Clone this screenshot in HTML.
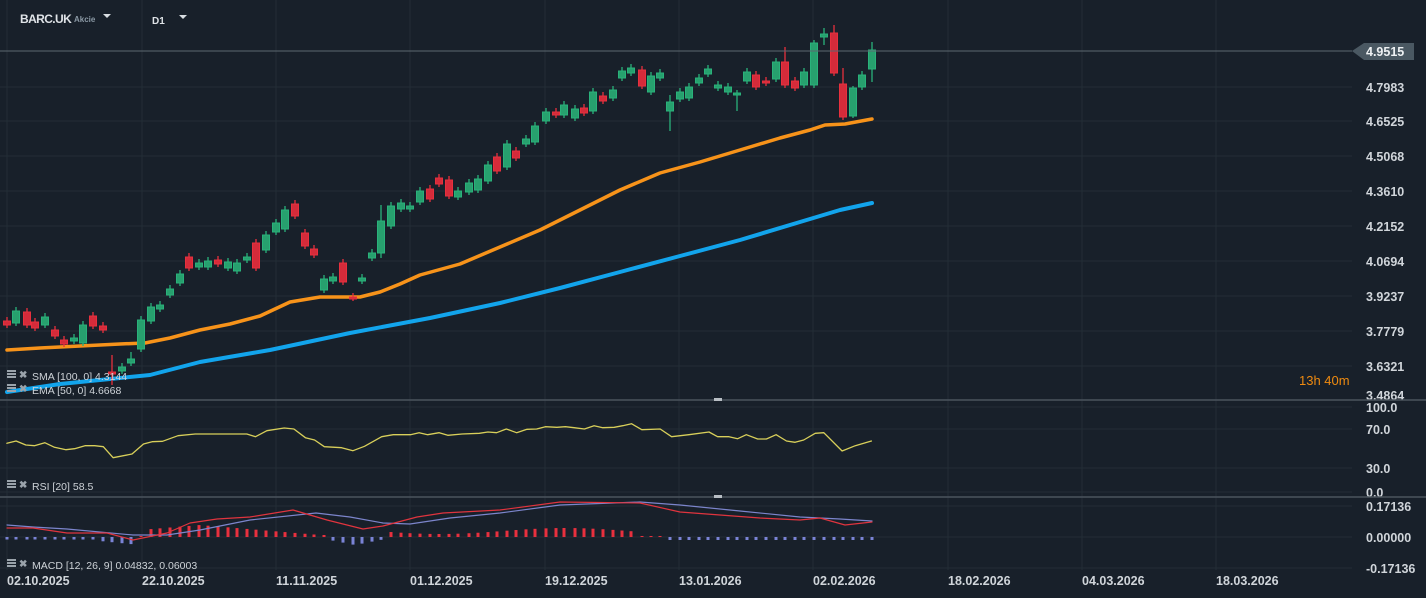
<!DOCTYPE html>
<html><head><meta charset="utf-8">
<style>
html,body{margin:0;padding:0;background:#18202a;}
body{width:1426px;height:598px;overflow:hidden;position:relative;font-family:"Liberation Sans",sans-serif;}
svg{position:absolute;left:0;top:0;}
</style></head><body>
<svg id="s" width="1426" height="598" xmlns="http://www.w3.org/2000/svg" font-family="Liberation Sans, sans-serif">
<rect width="1426" height="598" fill="#18202a"/>
<g id="grid" stroke="#232d36" stroke-width="1"></g>
<g id="main"></g>
<!-- header -->
<text x="20" y="23" fill="#dfe3e7" font-size="12" font-weight="bold" letter-spacing="-0.6">BARC.UK</text>
<text x="74" y="22" fill="#8a98a4" font-size="8" font-weight="bold">Akcie</text>
<path d="M103 14 l8 0 l-4 4 z" fill="#d8dde2"/>
<text x="152" y="24" fill="#dfe3e7" font-size="10" font-weight="bold">D1</text>
<path d="M179 15 l8 0 l-4 4 z" fill="#d8dde2"/>
<!-- price line -->
<line x1="0" y1="51" x2="1352" y2="51" stroke="#5c6770" stroke-width="1"/>
<path d="M1352 51 L1364 43 L1414 43 L1414 60 L1364 60 Z" fill="#4a5862"/>
<text x="1366" y="56" fill="#eef1f3" font-size="12.5" font-weight="bold">4.9515</text>
<g id="labels" fill="#d0d5da" font-size="12.5" font-weight="bold"></g>
<!-- panel separators -->
<line x1="0" y1="400" x2="1426" y2="400" stroke="#4a545d" stroke-width="1.5"/>
<line x1="0" y1="497" x2="1426" y2="497" stroke="#4a545d" stroke-width="1.5"/>
<rect x="714" y="398" width="8" height="3" fill="#b8bec4"/>
<rect x="714" y="495" width="8" height="3" fill="#b8bec4"/>
<text x="1299" y="385" fill="#ee8a10" font-size="13">13h 40m</text>
<g id="legend" fill="#cdd2d7" font-size="10.5"></g>
</svg>
<script>
const NS="http://www.w3.org/2000/svg";
function el(p,t,a){const e=document.createElementNS(NS,t);for(const k in a)e.setAttribute(k,a[k]);p.appendChild(e);return e;}
const grid=document.getElementById('grid'),main=document.getElementById('main'),lab=document.getElementById('labels'),leg=document.getElementById('legend');
const gx=[7,142,276,410,545,679,813,948,1082,1216];
gx.forEach(x=>{el(grid,'line',{x1:x,y1:0,x2:x,y2:570});});
const py=[[51,null],[87,'4.7983'],[121,'4.6525'],[156,'4.5068'],[191,'4.3610'],[226,'4.2152'],[261,'4.0694'],[296,'3.9237'],[331,'3.7779'],[366,'3.6321'],[395,'3.4864']];
py.forEach(([y,t])=>{if(y!==51&&y!==395)el(grid,'line',{x1:0,y1:y,x2:1352,y2:y});if(t){const e=el(lab,'text',{x:1366,y:y+5});e.textContent=t;}});
[[407,'100.0'],[429,'70.0'],[468,'30.0'],[492,'0.0'],[506,'0.17136'],[537,'0.00000'],[568,'-0.17136']].forEach(([y,t])=>{
 el(grid,'line',{x1:0,y1:y,x2:1352,y2:y});const e=el(lab,'text',{x:1366,y:y+5});e.textContent=t;});
const ds=['02.10.2025','22.10.2025','11.11.2025','01.12.2025','19.12.2025','13.01.2026','02.02.2026','18.02.2026','04.03.2026','18.03.2026'];
ds.forEach((d,i)=>{const e=el(lab,'text',{x:gx[i],y:585});e.textContent=d;});
const C=[[7,321,325],[16,323,311],[27,312,325],[35,322,328],[45,325,317],[55,330,336],[64,340,344],[74,341,338],[83,343,325],[93,316,326],[103,326,330],[112,372,374],[122,371,367],[131,363,359],[141,349,320],[151,321,307],[160,309,305],
[170,295,289],[180,283,274],[189,257,268],[199,267,263],[208,267,261],[218,260,264],[228,268,262],[237,271,263],[247,260,257],[256,243,268],[266,250,235],[276,232,223],[285,229,210],[295,204,216],[305,233,246],[314,249,255],[324,290,279],[333,281,277],[343,263,282],[353,297,298],[362,281,278],[372,258,253],[381,253,221],[391,226,206],[401,209,203],[410,209,206],[420,202,191],[430,189,199],[439,178,184],[449,180,196],[458,197,191],[469,192,183],[478,190,179],[488,181,165],[497,157,171],[507,167,144],[516,151,158],[526,144,139],[535,142,126],[546,121,112],[556,112,115],[564,115,105],[575,118,109],[584,108,113],[593,111,92],[603,96,101],[613,98,90],
[622,78,71],[631,73,68],[642,70,86],[651,92,76],[660,78,73],[670,111,102],[680,99,92],[689,98,87],[699,83,78],[708,74,69],[718,88,85],[728,92,87],[737,95,93],[747,81,72],[756,75,87],[766,81,83],[776,79,62],[785,62,85],[795,81,88],[804,85,72],[814,85,43],[824,37,34],[834,33,73],[843,84,117],[853,116,88],[862,87,75],[872,69,50]];
const ext={112:[355,385],670:[95,131],737:[90,111],843:[68,120],853:[86,118],872:[42,82],824:[28,45],834:[25,76],814:[40,88],785:[47,88],381:[205,258],131:[352,366]};
function poly(pts,st,w){return el(main,'polyline',{points:pts.map(p=>p.join(',')).join(' '),fill:'none',stroke:st,'stroke-width':w,'stroke-linejoin':'round','stroke-linecap':'round'});}
poly([[7,350],[40,348],[80,346],[120,344],[145,343],[170,338],[200,330],[230,324],[260,316],[290,302],[320,297],[360,297],[380,292],[400,284],[420,275],[460,264],[500,247],[540,230],[580,210],[620,190],[660,173],[700,162],[740,150],[780,138],[810,130],[825,125],[845,124],[872,119]],'#f7931a',3.5);
poly([[7,392],[60,384],[100,380],[150,375],[200,362],[270,350],[350,333],[430,318],[500,303],[560,288],[620,272],[680,256],[740,240],[800,222],[840,210],[872,203]],'#12a4ec',4);
C.forEach(([x,o,c])=>{const up=c<o;const col=up?'#2ab27b':'#e8303e';const top=Math.min(o,c),bot=Math.max(o,c);
 let h=top-4,l=bot+3;if(ext[x]){h=ext[x][0];l=ext[x][1];}
 el(main,'line',{x1:x,y1:h,x2:x,y2:l,stroke:col,'stroke-width':1.3});
 el(main,'rect',{x:x-3.5,y:top,width:7,height:Math.max(bot-top,2),fill:up?'#27a06e':'#d52b3a',stroke:col,'stroke-width':1});});
const r=[[12,130],[28,123],[45,135],[60,137],[78,128],[95,142],[115,149],[130,146],[148,137],[165,137],[180,140],[197,173],[230,162],[250,132],[265,125],[283,124],[310,107],[340,102],[400,102],[430,102],[445,110],[465,92],[495,84],[512,87],[532,113],[548,120],[565,140],[595,143],[615,152],[635,139],[665,110],[685,104],[715,104],[730,98],[745,104],[765,98],[780,106],[805,102],[835,100],[850,96],[865,98],[882,87],[900,98],[918,88],[935,87],[950,80],[970,82],[985,80],[1000,83],[1018,87],[1035,77],[1050,83],[1070,82],[1085,77],[1100,71],[1118,89],[1150,87],[1170,110],[1200,104],[1235,96],[1250,110],[1270,110],[1285,116],[1300,104],[1320,117],[1335,117],[1352,104],[1370,123],[1385,127],[1400,120],[1420,100],[1435,98],[1467,153],[1490,137],[1518,123]].map(([a,b])=>[(a/1.742).toFixed(1),(400+b/3).toFixed(1)]);
poly(r,'#d8cf5a',1.3);
C.forEach(([x])=>{let v;
 if(x<100)v=-2.5;else if(x<140)v=-4-(x-100)/10;else if(x<150)v=1;else if(x<330){v=12-Math.abs(x-200)/12;if(v<2)v=2;}
 else if(x<390)v=-(8-Math.abs(x-355)/5);else if(x<640)v=6+3*Math.sin(x/40);else if(x<665)v=1;else v=-3;
 const col=v>0?'#e8303e':'#7a83d6';
 el(main,'rect',{x:x-1.5,y:v>0?537-v:537,width:3,height:Math.abs(v),fill:col});});
poly([[7,525],[33,527],[67,529],[133,535],[167,535],[200,530],[250,520],[316,513],[350,517],[383,523],[410,524],[450,518],[500,513],[560,505],[640,502],[680,505],[740,511],[800,517],[840,519],[872,521]],'#7c85cc',1.2);
poly([[7,528],[33,528],[67,533],[107,533],[133,540],[167,533],[190,523],[217,519],[250,517],[293,510],[327,520],[363,529],[383,526],[417,517],[443,513],[500,510],[560,502],[640,503],[680,512],[720,515],[760,518],[800,520],[820,518],[845,525],[872,522]],'#e0343e',1.2);
function legi(x,y,t){[8,5,2].forEach(d=>el(leg,'rect',{x:x,y:y-d,width:9,height:2,fill:'#9aa3ab'}));
 const e1=el(leg,'text',{x:x+12,y:y,'font-size':10,'font-weight':'bold',fill:'#9aa3ab'});e1.textContent='✖';
 const e=el(leg,'text',{x:x+25,y:y+2});e.textContent=t;}
legi(7,378,'SMA [100,  0] 4.3144');legi(7,392,'EMA [50,  0] 4.6668');legi(7,488,'RSI [20]  58.5');legi(7,567,'MACD [12,  26, 9] 0.04832,  0.06003');
</script>
</body></html>
